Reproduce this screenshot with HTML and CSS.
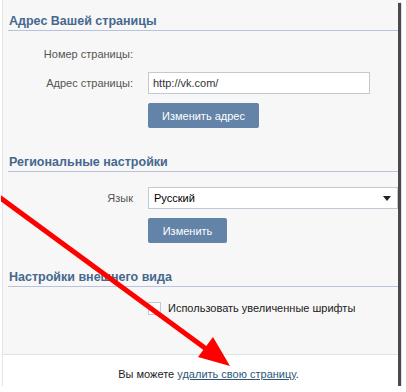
FILE: index.html
```html
<!DOCTYPE html>
<html lang="ru">
<head>
  <meta charset="UTF-8" />
  <title>Настройки</title>
  <link rel="stylesheet" href="styles.css">
</head>
<body>
  <div class="page">

    <div class="section">
      <h2>Адрес Вашей страницы</h2>
      <div class="row first">
        <span class="label">Номер страницы:</span>
      </div>
      <div class="row field">
        <span class="label">Адрес страницы:</span>
        <input type="text" class="text-input" value="http://vk.com/">
      </div>
      <div class="row buttons">
        <span class="label"></span>
        <button class="btn btn-wide">Изменить адрес</button>
      </div>
    </div>

    <div class="section">
      <h2>Региональные настройки</h2>
      <div class="row first-select">
        <span class="label">Язык</span>
        <div class="select">Русский<span class="caret"></span></div>
      </div>
      <div class="row buttons">
        <span class="label"></span>
        <button class="btn">Изменить</button>
      </div>
    </div>

    <div class="section">
      <h2>Настройки внешнего вида</h2>
      <div class="row check-row">
        <span class="label"></span>
        <span class="checkbox"></span>
        <span class="check-label">Использовать увеличенные шрифты</span>
      </div>
    </div>

    <div class="footer">
      Вы можете <a href="#">удалить свою страницу</a>.
    </div>

    <!-- red arrow drawn over the screenshot -->
    <svg class="arrow" width="406" height="392" viewBox="0 0 406 392">
      <line x1="-2" y1="197" x2="208" y2="351" stroke="#ff0000" stroke-width="5" />
      <polygon points="229,366 197,357 212,337" fill="#ff0000" />
    </svg>
  </div>
</body>
</html>
```

FILE: styles.css
```css
body {
  margin: 0;
  background: #ffffff;
  font-family: "Liberation Sans", Arial, sans-serif;
  font-size: 11px;
  color: #000;
}
.page {
  position: relative;
  width: 396px;
  height: 386px;
  margin-left: 2px;
  background: #f7f7f7;
  border-left: 1px solid #e4e4e4;
  box-sizing: border-box;
  box-shadow: 3px 3px 1px #4a4a4a;
  display: flex;
  flex-direction: column;
}
h2 {
  margin: 0 0 0 5px;
  padding: 13px 0 0 1px;
  line-height: 17px;
  font-size: 12.5px;
  font-weight: bold;
  color: #45688e;
  border-bottom: 1px solid #b7c3dc;
}
.section + .section {
  margin-top: 13px;
}
.section:last-of-type {
  margin-top: 14px;
}
.row {
  display: flex;
  align-items: center;
}
.label {
  width: 130px;
  flex: none;
  text-align: right;
  padding-right: 15px;
  box-sizing: content-box;
  color: #555;
}
.row.first {
  height: 22px;
  margin-top: 12px;
}
.row.field {
  margin-top: 7px;
}
.row.buttons {
  margin-top: 9px;
}
.row.first-select {
  margin-top: 15px;
}
.text-input {
  width: 222px;
  height: 22px;
  box-sizing: border-box;
  border: 1px solid #c0cad5;
  padding: 0 4px;
  margin: 0;
  font-family: inherit;
  font-size: 11px;
  color: #333;
  background: #fff;
}
.select {
  position: relative;
  width: 250px;
  height: 22px;
  box-sizing: border-box;
  border: 1px solid #c0cad5;
  background: #fff;
  padding-left: 5px;
  line-height: 20px;
}
.caret {
  position: absolute;
  right: 6px;
  top: 8px;
  border-left: 4px solid transparent;
  border-right: 4px solid transparent;
  border-top: 5px solid #222;
}
.btn {
  height: 25px;
  width: 79px;
  padding: 0;
  border: none;
  border-radius: 2px;
  background: #6383a8;
  color: #fff;
  font-family: inherit;
  font-size: 11px;
}
.btn-wide {
  width: 111px;
}
.check-row {
  margin-top: 12px;
  height: 18px;
}
.checkbox {
  width: 13px;
  height: 13px;
  border: 1px solid #c0cad5;
  background: #fff;
  box-sizing: border-box;
}
.check-label {
  margin-left: 7px;
  color: #222;
}
.footer {
  margin-top: auto;
  height: 32px;
  box-sizing: border-box;
  border-top: 1px solid #dde3ea;
  background: #fff;
  padding: 10px 0 0 16px;
  line-height: 18px;
  text-align: center;
  color: #222;
}
.footer a {
  color: #2b587a;
}
.arrow {
  position: absolute;
  left: -2px;
  top: 0;
  pointer-events: none;
}
```
